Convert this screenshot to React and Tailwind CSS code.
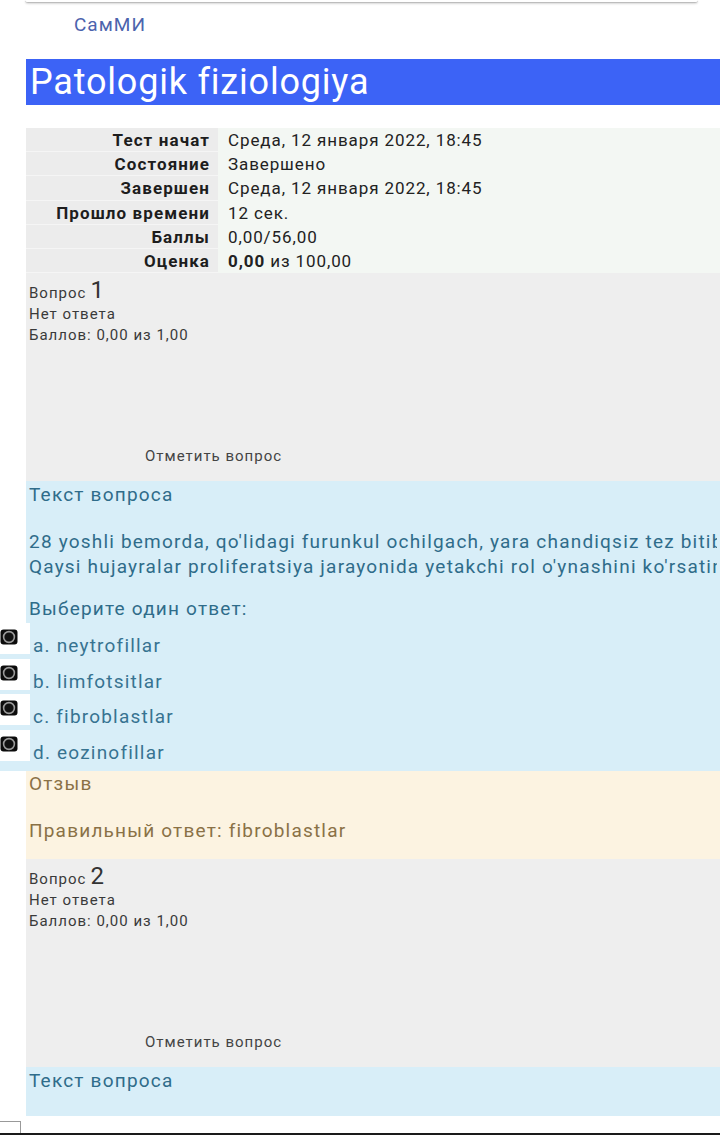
import React from 'react';

const summary = [
  { label: 'Тест начат', value: 'Среда, 12 января 2022, 18:45' },
  { label: 'Состояние', value: 'Завершено' },
  { label: 'Завершен', value: 'Среда, 12 января 2022, 18:45' },
  { label: 'Прошло времени', value: '12 сек.' },
  { label: 'Баллы', value: '0,00/56,00' },
  { label: 'Оценка', value: <><b className="font-bold">0,00</b> из 100,00</> },
];

const options = ['a. neytrofillar', 'b. limfotsitlar', 'c. fibroblastlar', 'd. eozinofillar'];

function Radio() {
  return (
    <div className="flex h-[31px] w-[30px] items-start bg-white pt-[6px]">
      <svg width="18" height="16" viewBox="0 0 18 16">
        <rect x="0.5" y="0.5" width="17" height="15" rx="3" fill="#0b0b0b" />
        <circle cx="9" cy="8" r="5.4" fill="#111" stroke="#9a9a9a" strokeWidth="1.6" />
      </svg>
    </div>
  );
}

function QuestionInfo({ n }) {
  return (
    <div className="ml-[26px] h-[208px] bg-[#eeeeee] px-[3px] pt-[6px] text-[15px] tracking-[1px] text-[#3a3a3a]">
      <div className="flex items-baseline gap-1 leading-[22px]">
        <span>Вопрос</span>
        <span className="text-[24px] text-[#333]">{n}</span>
      </div>
      <div className="leading-[21px]">Нет ответа</div>
      <div className="leading-[21px]">Баллов: 0,00 из 1,00</div>
      <div className="mt-[99px] pl-[116px] text-[#444]">Отметить вопрос</div>
    </div>
  );
}

export default function App() {
  return (
    <div
      className="relative h-[1135px] w-[720px] overflow-hidden bg-white"
      style={{ fontFamily: 'Roboto, "Noto Sans", sans-serif' }}
    >
      {/* top card edge */}
      <div className="ml-[25px] mr-[22px] h-[3px] rounded-b border-b border-[#bdbdbd] shadow-[0_1px_2px_rgba(0,0,0,0.15)]" />

      <div className="pl-[74px] pt-[9px] text-[19px] leading-[26px] tracking-[1px] text-[#4b63ad]">СамМИ</div>

      {/* course title */}
      <div className="ml-[26px] mt-[21px] flex h-[46px] items-center bg-[#3c63f6] pl-[4px] text-[36px] leading-none tracking-[0.8px] text-white">
        Patologik fiziologiya
      </div>

      {/* summary table */}
      <div className="ml-[26px] mt-[23px] grid grid-cols-[192px_1fr] text-[17px] leading-[24.2px] text-[#222]">
        {summary.map((row) => (
          <React.Fragment key={row.label}>
            <div className="bg-[#ececec] pr-[8px] text-right font-bold tracking-[1.1px] text-[#1d1d1d] shadow-[inset_0_-1px_0_#f5f5f5]">
              {row.label}
            </div>
            <div className="whitespace-nowrap bg-[#f3f7f3] pl-[10px] tracking-[0.9px]">{row.value}</div>
          </React.Fragment>
        ))}
      </div>

      <QuestionInfo n="1" />

      {/* question text */}
      <div className="ml-[26px] bg-[#d8eef8] px-[3px] pb-[1px] pt-[1px] text-[19px] tracking-[1.2px] text-[#2f6c8a]">
        <div className="leading-[26px]">Текст вопроса</div>
        <div className="mt-[21px] overflow-hidden whitespace-nowrap leading-[25px]">
          <div>28 yoshli bemorda, qo'lidagi furunkul ochilgach, yara chandiqsiz tez bitib ketdi.</div>
          <div>Qaysi hujayralar proliferatsiya jarayonida yetakchi rol o'ynashini ko'rsating.</div>
        </div>
        <div className="mt-[17px] leading-[26px]">Выберите один ответ:</div>
      </div>
      <div className="bg-[#d8eef8] pb-[6px] text-[19px] tracking-[1.2px] text-[#377391]">
        {options.map((o) => (
          <div key={o} className="flex h-[35.5px] items-start">
            <Radio />
            <span className="pl-[3px] pt-[10px] leading-[26px]">{o}</span>
          </div>
        ))}
      </div>

      {/* feedback */}
      <div className="ml-[26px] h-[88px] bg-[#fcf3e1] px-[3px] text-[19px] tracking-[1.2px] text-[#8a7146]">
        <div className="leading-[26px]">Отзыв</div>
        <div className="mt-[21px] leading-[26px]">Правильный ответ: fibroblastlar</div>
      </div>

      <QuestionInfo n="2" />

      <div className="ml-[26px] h-[49px] bg-[#d8eef8] px-[3px] pt-[1px] text-[19px] tracking-[1.2px] text-[#2f6c8a]">
        <div className="leading-[26px]">Текст вопроса</div>
      </div>

      {/* bottom edge */}
      <div className="absolute bottom-0 left-0 h-[14px] w-[21px] border-r border-t border-[#999] bg-white" />
      <div className="absolute bottom-0 left-0 h-[2px] w-full bg-[#1a1a1a]" />
    </div>
  );
}
